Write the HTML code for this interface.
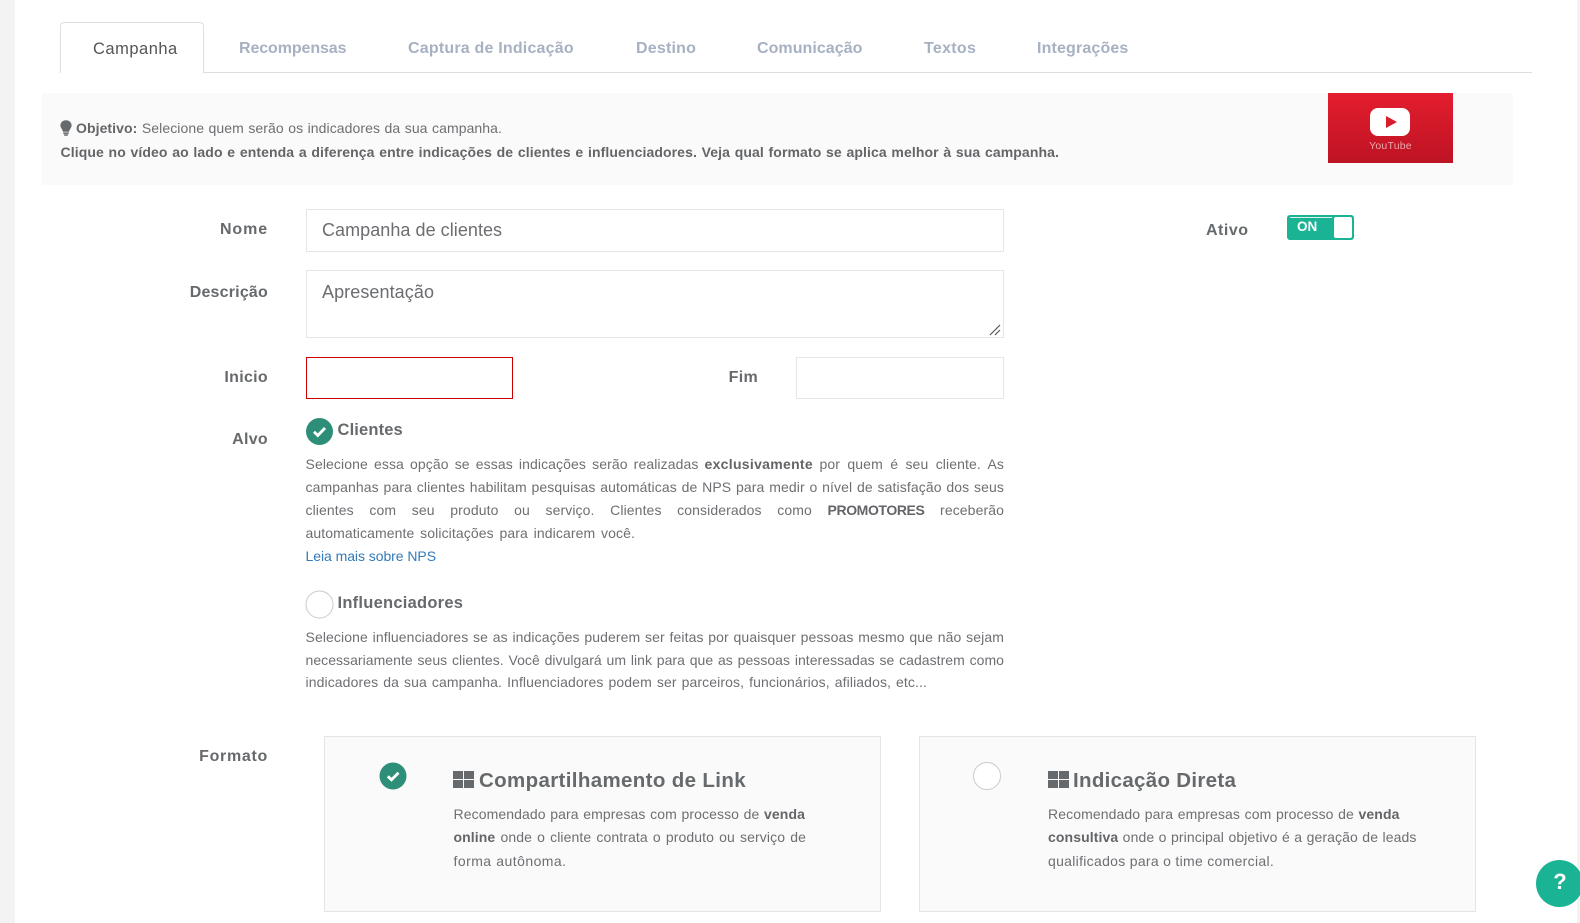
<!DOCTYPE html>
<html lang="pt-BR"><head><meta charset="utf-8"><title>Campanha</title>
<style>
html,body{margin:0;padding:0;width:1580px;height:923px;overflow:hidden;background:#fff}
body{position:relative;font-family:"Liberation Sans",sans-serif;color:#676a6c}
.a{position:absolute;box-sizing:border-box}
.t{position:absolute;white-space:nowrap;line-height:20px;height:20px}
.j{text-align:justify;text-align-last:justify;font-size:14px;letter-spacing:.1px;color:#6d6f72}
.tab{font-size:16px;font-weight:bold;color:#a7b1c2;top:38.500px}
.lb{font-size:16px;font-weight:bold;color:#676a6c;width:120px;left:148px;text-align:right;letter-spacing:.3px}
.in{background:#fff;border:1px solid #e5e6e7}
.card{background:#fafafa;border:1px solid #e4e4e4}
.ti{font-size:20.5px;font-weight:bold;letter-spacing:.35px;line-height:24px;height:24px}
b{font-weight:bold;color:#636568}
</style></head><body>
<div class="a" style="left:0;top:0;width:15px;height:923px;background:#f3f3f4"></div>
<div class="a" style="left:1577px;top:0;width:3px;height:923px;background:#f3f3f4"></div>

<div class="a" style="left:60px;top:72px;width:1472px;height:1px;background:#dcdee0"></div>
<div class="a" style="left:60px;top:22px;width:144px;height:51px;background:#fff;border:1px solid #dcdee0;border-bottom:0;border-radius:4px 4px 0 0"></div>
<div class="t tab" style="left:93px;color:#555;font-weight:normal;font-size:16.500px;letter-spacing:.5px">Campanha</div>
<div class="t tab" style="left:239px;letter-spacing:-.1px">Recompensas</div>
<div class="t tab" style="left:408px;letter-spacing:.2px">Captura de Indicação</div>
<div class="t tab" style="left:636px;letter-spacing:.2px">Destino</div>
<div class="t tab" style="left:757px;letter-spacing:.05px">Comunicação</div>
<div class="t tab" style="left:924px;letter-spacing:.3px">Textos</div>
<div class="t tab" style="left:1037px;letter-spacing:.15px">Integrações</div>

<div class="a" style="left:42px;top:93px;width:1471px;height:92px;background:#fafafa"></div>
<svg class="a" style="left:60px;top:120px" width="12" height="16" viewBox="0 0 12 16"><path d="M6 0.2C2.8 0.2.4 2.5.4 5.4c0 2.6 2.1 3.7 2.6 6.3h6c.5-2.6 2.6-3.7 2.6-6.3C11.6 2.500 9.200.2 6 .2z" fill="#676a6c"/><rect x="3.200" y="12.400" width="5.600" height="1.500" fill="#676a6c"/><rect x="4" y="14.300" width="4" height="1.500" rx=".7" fill="#676a6c"/></svg>
<div class="t j" style="left:76px;top:118px;width:426px;letter-spacing:.08px"><b>Objetivo:</b> Selecione quem serão os indicadores da sua campanha.</div>
<div class="t j" style="left:60.500px;top:142px;width:998.500px;font-weight:bold;color:#636568">Clique no vídeo ao lado e entenda a diferença entre indicações de clientes e influenciadores. Veja qual formato se aplica melhor à sua campanha.</div>

<div class="a" style="left:1328px;top:93px;width:125px;height:70px;background:linear-gradient(#e41e2f,#bd1323)"></div>
<div class="a" style="left:1370px;top:108px;width:40px;height:28px;background:#fff;border-radius:8px"></div>
<svg class="a" style="left:1386px;top:116px" width="11" height="12" viewBox="0 0 11 12"><path d="M0 0L11 6L0 12Z" fill="#d91c2c"/></svg>
<div class="t" style="left:1369px;top:136px;width:43px;font-size:10.500px;color:#eba7ae;text-align:center;letter-spacing:.2px">YouTube</div>

<div class="t lb" style="top:220px;letter-spacing:.9px">Nome</div>
<div class="a in" style="left:306px;top:209px;width:698px;height:43px"></div>
<div class="t" style="left:322px;top:220px;font-size:18px;color:#6b6d70;letter-spacing:.05px">Campanha de clientes</div>

<div class="t lb" style="top:282.500px;letter-spacing:.2px">Descrição</div>
<div class="a in" style="left:306px;top:270px;width:698px;height:68px"></div>
<div class="t" style="left:322px;top:281.500px;font-size:18px;color:#6b6d70;letter-spacing:.08px">Apresentação</div>
<svg class="a" style="left:989px;top:324px" width="13" height="12" viewBox="0 0 13 12"><path d="M1 11L11 1M6 11L11 6" stroke="#555" stroke-width="1.200" fill="none"/></svg>

<div class="t lb" style="top:367.500px">Inicio</div>
<div class="a" style="left:306px;top:357px;width:207px;height:42px;background:#fff;border:1px solid #cc0000"></div>
<div class="t lb" style="top:367.500px;left:638px">Fim</div>
<div class="a in" style="left:796px;top:357px;width:208px;height:42px"></div>

<div class="t" style="left:1206px;top:220.500px;font-size:16px;font-weight:bold;letter-spacing:.5px">Ativo</div>
<div class="a" style="left:1287px;top:215px;width:67px;height:25px;background:#1ab394;border-radius:3px"></div>
<div class="a" style="left:1290px;top:217px;width:42px;height:1px;background:#d8f2ec"></div>
<div class="a" style="left:1334px;top:217px;width:18px;height:21px;background:#fff;border-radius:2px"></div>
<div class="t" style="left:1297px;top:217px;font-size:13.500px;font-weight:bold;color:#fff">ON</div>

<div class="t lb" style="top:429.500px">Alvo</div>
<svg class="a" style="left:305px;top:417px" width="29" height="29" viewBox="0 0 29 29"><circle cx="14.500" cy="14.500" r="13.500" fill="#2e8f78"/><path d="M9 14.800L12.800 18.500L20 11" stroke="#fff" stroke-width="2.800" fill="none"/></svg>
<div class="t" style="left:337.500px;top:420px;font-size:16.500px;font-weight:bold;color:#676a6c;letter-spacing:.15px">Clientes</div>
<div class="t j" style="left:305.500px;top:454px;width:393px">Selecione essa opção se essas indicações serão realizadas</div>
<div class="t j" style="left:704.500px;top:454px;letter-spacing:.3px;text-align-last:left"><b>exclusivamente</b></div>
<div class="t j" style="left:819.500px;top:454px;width:184.500px">por quem é seu cliente. As</div>
<div class="t j" style="left:305.500px;top:477px;width:698.500px">campanhas para clientes habilitam pesquisas automáticas de NPS para medir o nível de satisfação dos seus</div>
<div class="t j" style="left:305.500px;top:500px;width:698.500px">clientes com seu produto ou serviço. Clientes considerados como <b style="letter-spacing:-.4px">PROMOTORES</b> receberão</div>
<div class="t j" style="left:305.500px;top:523px;width:329.500px">automaticamente solicitações para indicarem você.</div>
<div class="t j" style="left:305.500px;top:546px;width:130.500px;color:#337ab7;letter-spacing:-.06px">Leia mais sobre NPS</div>

<svg class="a" style="left:305px;top:590px" width="29" height="29" viewBox="0 0 29 29"><circle cx="14.500" cy="14.500" r="13.500" fill="#fff" stroke="#c9cbcc" stroke-width="1"/></svg>
<div class="t" style="left:337.500px;top:593px;font-size:16.500px;font-weight:bold;letter-spacing:.25px">Influenciadores</div>
<div class="t j" style="left:305.500px;top:627px;width:698.500px">Selecione influenciadores se as indicações puderem ser feitas por quaisquer pessoas mesmo que não sejam</div>
<div class="t j" style="left:305.500px;top:650px;width:698.500px;letter-spacing:.04px">necessariamente seus clientes. Você divulgará um link para que as pessoas interessadas se cadastrem como</div>
<div class="t j" style="left:305.500px;top:672px;width:621.500px">indicadores da sua campanha. Influenciadores podem ser parceiros, funcionários, afiliados, etc...</div>

<div class="t lb" style="top:747px;letter-spacing:.7px">Formato</div>
<div class="a card" style="left:324px;top:736px;width:557px;height:176px"></div>
<div class="a card" style="left:919px;top:736px;width:557px;height:176px"></div>
<svg class="a" style="left:379px;top:762px" width="28" height="28" viewBox="0 0 28 28"><circle cx="14" cy="14" r="13.500" fill="#2e8f78"/><path d="M8.800 14.300L12.500 17.800L19.500 10.800" stroke="#fff" stroke-width="2.800" fill="none"/></svg>
<svg class="a" style="left:973px;top:762px" width="28" height="28" viewBox="0 0 28 28"><circle cx="14" cy="14" r="13.500" fill="#fff" stroke="#c9cbcc" stroke-width="1"/></svg>

<svg class="a" style="left:453px;top:771px" width="21" height="17" viewBox="0 0 21 17"><path d="M0 0h10v8H0zM11 0h10v8H11zM0 9h10v8H0zM11 9h10v8H11z" fill="#676a6c"/></svg>
<div class="t ti" style="left:479px;top:769px">Compartilhamento de Link</div>
<div class="t j" style="left:453.500px;top:804px;width:351.500px">Recomendado para empresas com processo de <b>venda</b></div>
<div class="t j" style="left:453.500px;top:827px;width:352.500px"><b>online</b> onde o cliente contrata o produto ou serviço de</div>
<div class="t j" style="left:453.500px;top:851px;width:113px;letter-spacing:.45px">forma autônoma.</div>

<svg class="a" style="left:1048px;top:771px" width="21" height="17" viewBox="0 0 21 17"><path d="M0 0h10v8H0zM11 0h10v8H11zM0 9h10v8H0zM11 9h10v8H11z" fill="#676a6c"/></svg>
<div class="t ti" style="left:1073px;top:769px;letter-spacing:.3px">Indicação Direta</div>
<div class="t j" style="left:1048px;top:804px;width:351.500px">Recomendado para empresas com processo de <b>venda</b></div>
<div class="t j" style="left:1048px;top:827px;width:368.500px"><b>consultiva</b> onde o principal objetivo é a geração de leads</div>
<div class="t j" style="left:1048px;top:851px;width:224px;letter-spacing:.3px">qualificados para o time comercial.</div>

<div class="a" style="left:1536px;top:860px;width:47px;height:47px;border-radius:50%;background:#1ab394"></div>
<div class="t" style="left:1552px;top:872px;width:16px;font-size:22px;font-weight:bold;color:#fff;text-align:center">?</div>
</body></html>
